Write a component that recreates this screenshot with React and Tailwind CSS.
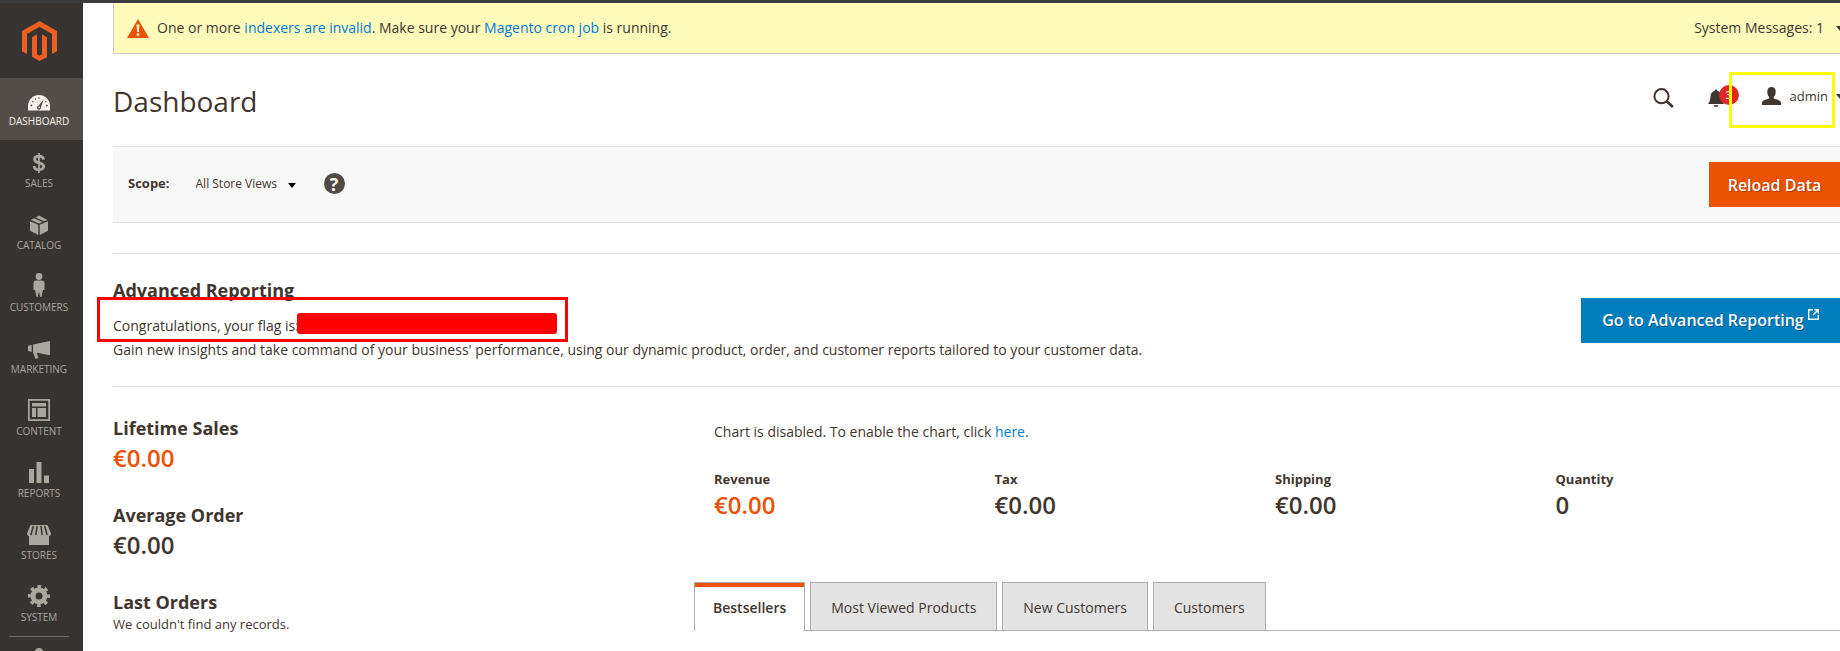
import React from "react";

const icons = {
  dashboard: (
    <svg viewBox="0 0 22 16" className="h-4 w-[22px]" fill="currentColor">
      <path d="M0 15.500V11a11 11 0 0 1 22 0v4.500z" />
      <g fill="#524d49">
        <path d="M15.800 4.300 12.900 12.300a2 2 0 1 1-2.500-1.500z" />
        <circle cx="3.400" cy="10.500" r=".9" />
        <circle cx="4.800" cy="6.600" r=".8" />
        <circle cx="7.600" cy="4" r=".8" />
        <circle cx="11" cy="3" r=".8" />
        <circle cx="17.800" cy="6.800" r=".8" />
        <circle cx="18.800" cy="10.500" r=".9" />
      </g>
      <circle cx="11.200" cy="12.400" r=".8" />
    </svg>
  ),
  sales: (
    <svg viewBox="0 0 12 20" className="h-5 w-3" fill="none" stroke="currentColor">
      <path d="M6 0v20" strokeWidth="1.800" />
      <path d="M10.600 6.600C10.300 4.400 8.600 3.200 6 3.200S1.600 4.500 1.600 6.400C1.600 11 10.600 8.600 10.600 13.300c0 2.100-1.900 3.400-4.600 3.400S1.300 15.300 1.100 13" strokeWidth="2.800" />
    </svg>
  ),
  catalog: (
    <svg viewBox="0 0 20 20" className="h-5 w-5" fill="currentColor">
      <path d="M1 6.200 9.300 9.800V20L1 15.800zM19 6.200 10.700 9.800V20L19 15.800z" />
      <path d="M1.600 4.900 5.200 3.200 13.600 6.900 10 8.600zM6.600 2.500 10 .6 18.400 4.900 15 6.300z" />
    </svg>
  ),
  customers: (
    <svg viewBox="0 0 12 24" className="h-6 w-3" fill="currentColor">
      <circle cx="6" cy="3.500" r="3.400" />
      <path d="M3 7.500h6c1.800 0 2.500 1.200 2.500 2.700V17H10l-.7 3-.8 4H7.300L6 18.500 4.700 24H3.500l-.8-4L2 17H.5v-6.800C.5 8.700 1.200 7.500 3 7.500z" />
    </svg>
  ),
  marketing: (
    <svg viewBox="0 0 22 18" className="h-[18px] w-[22px]" fill="currentColor">
      <path d="M22 0v14.200L8.800 11.700 10.500 17l-3 .9L5 11.300V3.600zM0 4.700 3.700 4v6.700L0 10z" />
    </svg>
  ),
  content: (
    <svg viewBox="0 0 22 22" className="h-[22px] w-[22px]" fill="currentColor">
      <path fillRule="evenodd" d="M0 0h22v22H0zM1.700 1.700v18.600h18.600V1.700z" />
      <path d="M4 4h14v3.500H4zM4 9h4v9H4zM9.500 9H18v9H9.500z" />
    </svg>
  ),
  reports: (
    <svg viewBox="0 0 20 21" className="h-[21px] w-5" fill="currentColor">
      <path d="M0 7h5v14H0zM7.500 0h5v21h-5zM15 13.500h5V21h-5z" />
    </svg>
  ),
  stores: (
    <svg viewBox="0 0 24 20" className="h-5 w-6" fill="currentColor">
      <path d="M3.500 0h17L24 8.500c0 1.500-.9 2.500-2 2.500v9H2v-9c-1.100 0-2-1-2-2.500z" />
      <path d="M6.200 1.500 4 9.500M10 1.500 8.900 9.500M14 1.500l1.100 8M17.800 1.500l2.200 8" stroke="#373330" strokeWidth="1.500" strokeLinecap="round" />
    </svg>
  ),
  system: (
    <svg viewBox="0 0 22 22" className="h-[22px] w-[22px]" fill="none" stroke="currentColor">
      <circle cx="11" cy="11" r="6" strokeWidth="5" />
      <circle cx="11" cy="11" r="9.300" strokeWidth="3.400" strokeDasharray="3.600 3.704" strokeDashoffset="1.800" />
    </svg>
  ),
};

const menu = ["Dashboard", "Sales", "Catalog", "Customers", "Marketing", "Content", "Reports", "Stores", "System"];

const totals = [
  ["Revenue", "€0.00"],
  ["Tax", "€0.00"],
  ["Shipping", "€0.00"],
  ["Quantity", "0"],
];

const tabs = ["Bestsellers", "Most Viewed Products", "New Customers", "Customers"];

function Caret({ className }) {
  return (
    <svg viewBox="0 0 8 5" className={"h-[5px] w-2 shrink-0 " + className} fill="currentColor" aria-hidden="true">
      <path d="M0 0h8L4 5z" />
    </svg>
  );
}

function Sidebar() {
  return (
    <nav className="flex w-[83px] shrink-0 flex-col bg-[#373330] text-[#aaa6a0]" aria-label="Main menu">
      <a href="#home" aria-label="Magento" className="flex h-[75px] shrink-0 justify-center pt-[18px] pr-1">
        <svg viewBox="0 0 35 40" className="h-10 w-[35px]" fill="#eb5f25">
          <path d="M17.500 0 35 10v20.300l-5 2.800V13L17.500 5.800 5 13v20.100l-5-2.800V10z" />
          <path d="M10 16.200 15 13.200v20l2.500 1.500 2.500-1.500v-20l5 3v20L17.500 40 10 35.800z" />
        </svg>
      </a>
      <ul className="shrink-0">
        {menu.map((name, i) => (
          <li key={name}>
            <a
              href={"#" + name.toLowerCase()}
              className={
                "flex h-[62px] flex-col items-center pr-[5px] text-[10px] leading-4 uppercase " +
                (i === 0 ? "bg-[#524d49] text-[#f7f3eb]" : "")
              }
            >
              <span className="flex h-[35px] items-end justify-center pb-[2px]">{icons[name.toLowerCase()]}</span>
              {name}
            </a>
          </li>
        ))}
      </ul>
      <div className="mr-[14px] ml-[9px] shrink-0 border-t border-[#736963]" />
      <a href="#partners" aria-label="Find partners" className="flex shrink-0 justify-center pt-[11px] pr-[5px]">
        <svg viewBox="0 0 22 22" className="h-[22px] w-[22px]" fill="currentColor">
          <circle cx="11" cy="4" r="4" />
          <path d="M4 22v-9l4-4h6l4 4v9z" />
        </svg>
      </a>
    </nav>
  );
}

function Figure({ title, value, accent }) {
  return (
    <div className="mb-[29px]">
      <h3 className="text-lg leading-6 font-bold">{title}</h3>
      <p className={"mt-[2px] text-2xl leading-8 font-semibold " + (accent ? "text-[#eb5202]" : "")}>{value}</p>
    </div>
  );
}

export default function App() {
  return (
    <div className="flex h-screen flex-col overflow-hidden border-t-[3px] border-[#3c3b3d] bg-white font-['Open_Sans','Noto_Sans',sans-serif] text-sm text-[#41362f]">
      <div className="flex min-h-0 flex-1">
        <Sidebar />
        <main className="min-w-0 flex-1 pl-[30px]">
          <div className="flex h-[51px] items-center border-b border-l border-[#ccc] bg-[#fffbbb] pl-[13px]">
            <svg viewBox="0 0 22 19" className="mr-2 h-[19px] w-[22px]" aria-hidden="true">
              <path d="M11 0 22 19H0z" fill="#eb5202" />
              <path d="M9.500 5.500h3l-.6 7.500h-1.800zM9.700 14.200h2.600v2.500H9.700z" fill="#fffbbb" />
            </svg>
            <p>
              One or more <a href="#indexers" className="text-[#007bdb]">indexers are invalid</a>. Make sure your{" "}
              <a href="#cron" className="text-[#007bdb]">Magento cron job</a> is running.
            </p>
            <button type="button" className="-mr-1 ml-auto flex items-center gap-3">
              System Messages: 1
              <Caret className="" />
            </button>
          </div>

          <header className="flex h-[92px] items-center">
            <h1 className="pt-[2px] text-[28px] leading-9">Dashboard</h1>
            <div className="-mr-1 ml-auto flex items-center pb-2">
              <button type="button" aria-label="Search" className="mt-1">
                <svg viewBox="0 0 21 20" className="h-5 w-[21px]" fill="none" stroke="currentColor">
                  <circle cx="8.500" cy="8.200" r="7.100" strokeWidth="2" />
                  <path d="m13.500 13 6.300 6" strokeWidth="2.800" />
                </svg>
              </button>
              <button type="button" aria-label="Notifications" className="relative mt-1 ml-[34px]">
                <svg viewBox="0 0 16 18" className="h-[18px] w-4" fill="currentColor">
                  <path d="M8 .5c.8 0 1.200.6 1.200 1.200 2.500.6 4 2.400 4.200 5 .2 3.500.7 6 2.600 8.300H0C1.900 12.700 2.400 10.200 2.600 6.700c.2-2.600 1.700-4.400 4.200-5C6.800 1.100 7.200.5 8 .5zM5.500 16.200h5a2.500 1.700 0 0 1-5 0z" />
                </svg>
                <span className="absolute -top-1 left-[11px] flex h-5 w-5 items-center justify-center rounded-full bg-[#e22626] text-[11px] leading-5 font-semibold text-white">
                  3
                </span>
              </button>
              <button type="button" className="relative ml-[38px] flex items-center text-[13px] leading-5">
                <svg viewBox="0 0 19 18" className="h-[18px] w-[19px]" fill="currentColor" aria-hidden="true">
                  <path d="M9.500 0c2.800 0 4.200 1.900 4.200 4.700 0 2-.7 4-1.900 5.200v1.700c2.300.9 7.200 1.500 7.200 4.400v2H0v-2c0-2.900 4.900-3.500 7.200-4.400V9.900C6 8.700 5.300 6.700 5.300 4.700 5.300 1.900 6.700 0 9.500 0z" />
                </svg>
                <span className="ml-[9px]">admin</span>
                <Caret className="ml-2" />
                <span className="pointer-events-none absolute -top-[14px] -left-[33px] h-[56px] w-[106px] border-[3px] border-[#ff0]" />
              </button>
            </div>
          </header>

          <div className="flex h-[77px] items-center border-y border-[#e3e3e3] bg-[#f8f8f8] pl-[15px]">
            <div className="flex items-center pb-[2px]">
              <label htmlFor="scope" className="text-[13px] font-bold">
                Scope:
              </label>
              <div className="ml-[26px] flex items-center">
                <select id="scope" className="-mr-2 appearance-none bg-transparent pr-[18px] text-[12px] leading-5">
                  <option>All Store Views</option>
                </select>
                <Caret className="pointer-events-none mt-[3px] text-black" />
              </div>
              <button type="button" aria-label="Help" className="ml-7 flex h-[21px] w-[21px] items-center justify-center rounded-full bg-[#514943] text-lg leading-5 font-bold text-[#f8f8f8]">
                ?
              </button>
            </div>
            <button type="button" className="ml-auto h-[45px] min-w-[131px] bg-[#eb5202] px-4 text-base font-semibold text-white text-shadow-[1px_1px_0_rgba(0,0,0,0.3)]">
              Reload Data
            </button>
          </div>

          <section className="mt-[30px] flex h-[134px] items-center border-y border-[#e3e3e3]">
            <div>
              <h2 className="text-lg leading-6 font-bold">Advanced Reporting</h2>
              <div className="relative mt-3 leading-6">
                Congratulations, your flag is:
                <span className="absolute -top-[17px] -left-4 h-[45px] w-[471px] border-[3px] border-[#f00]" />
                <span className="absolute -top-px left-[184px] h-[21px] w-[260px] rounded-[3px] bg-[#f00]" />
              </div>
              <p className="leading-6">
                Gain new insights and take command of your business' performance, using our dynamic product, order, and
                customer reports tailored to your customer data.
              </p>
            </div>
            <a href="#reporting" className="ml-auto flex h-[45px] min-w-[259px] items-center justify-center bg-[#007dbd] px-4 text-base font-semibold text-white text-shadow-[1px_1px_0_rgba(0,0,0,0.3)]">
              Go to Advanced Reporting
              <svg viewBox="0 0 11 11" className="mb-[11px] ml-1 h-[11px] w-[11px]" fill="none" stroke="currentColor" strokeWidth="1.400" aria-hidden="true">
                <path d="M5 .7H.7v9.600h9.600V6M6.500.7h3.800v3.800M10.300.7 5 6" />
              </svg>
            </a>
          </section>

          <div className="flex pt-[29px]">
            <div className="w-[581px] shrink-0">
              <Figure title="Lifetime Sales" value="€0.00" accent />
              <Figure title="Average Order" value="€0.00" />
              <h3 className="text-lg leading-6 font-bold">Last Orders</h3>
              <p className="text-[13px] leading-5">We couldn't find any records.</p>
            </div>
            <div className="min-w-0 flex-1">
              <p className="pt-1 pl-5 leading-6">
                Chart is disabled. To enable the chart, click <a href="#chart" className="text-[#007bdb]">here</a>.
              </p>
              <ul className="mt-[25px] mr-1 ml-5 grid grid-cols-4">
                {totals.map(([label, value], i) => (
                  <li key={label}>
                    <span className="block text-[13px] leading-5 font-bold">{label}</span>
                    <strong className={"block text-2xl leading-8 font-semibold " + (i === 0 ? "text-[#eb5202]" : "")}>{value}</strong>
                  </li>
                ))}
              </ul>
              <div role="tablist" className="mt-[61px] flex gap-[5px] border-b border-[#adadad]">
                {tabs.map((tab, i) => (
                  <button
                    key={tab}
                    type="button"
                    role="tab"
                    aria-selected={i === 0}
                    className={
                      i === 0
                        ? "-mb-px h-[49px] border border-b-0 border-[#adadad] bg-white px-[18px] pt-[2px] font-semibold shadow-[inset_0_4px_0_#eb5202]"
                        : "h-12 border border-b-0 border-[#adadad] bg-[#e3e3e3] px-5 pt-[2px]"
                    }
                  >
                    {tab}
                  </button>
                ))}
              </div>
            </div>
          </div>
        </main>
      </div>
    </div>
  );
}
